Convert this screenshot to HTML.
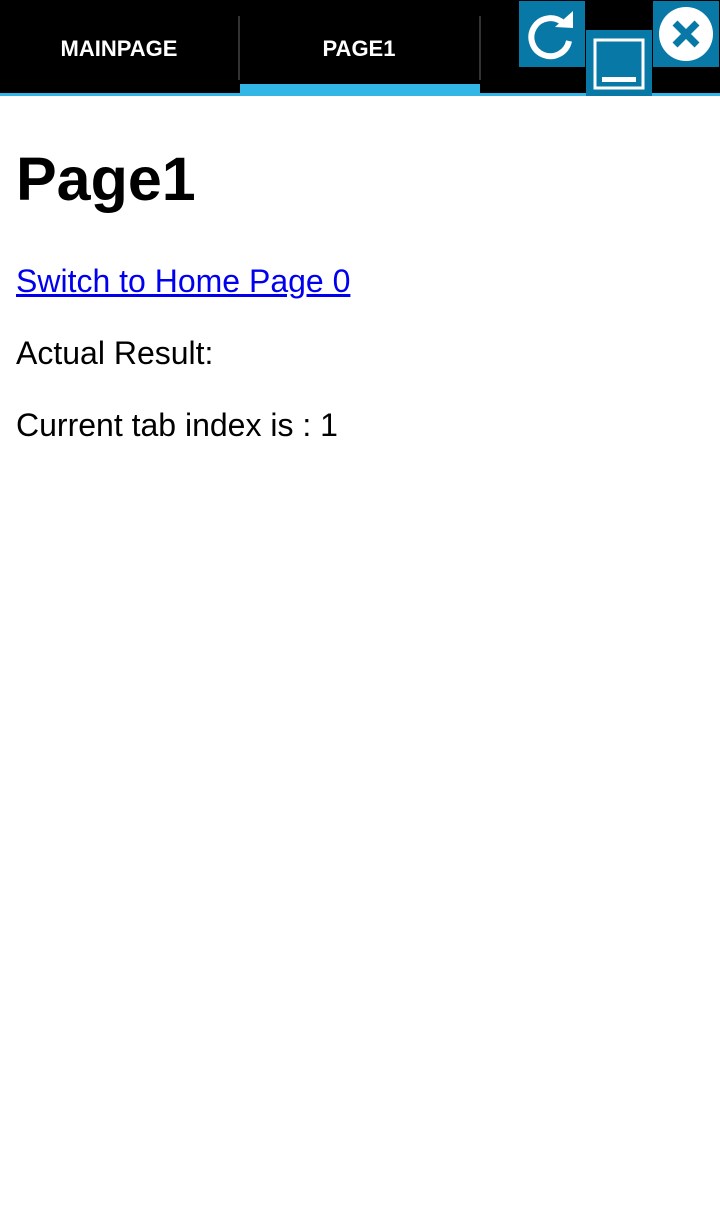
<!DOCTYPE html>
<html><head><style>
body{margin:0;width:720px;height:1230px;background:#fff;position:relative;overflow:hidden;font-family:"Liberation Sans",sans-serif}
.bar{position:absolute;left:0;top:0;width:720px;height:93px;background:#000}
.line{position:absolute;left:0;top:93px;width:720px;height:3px;background:#33b5e5}
.tab{position:absolute;top:0;height:96px;line-height:98px;color:#fff;font-weight:bold;font-size:22px;text-align:center}
.sep{position:absolute;top:16px;width:2px;height:64px;background:#333}
.ind{position:absolute;left:240px;top:84px;width:240px;height:12px;background:#33b5e5}
.btn{position:absolute;width:66px;height:66px;background:#0878a6}
h1{position:absolute;left:16px;top:144px;margin:0;font-size:61px;font-weight:bold}
p{position:absolute;left:16px;margin:0;font-size:32px}
a{color:#0000ee}
</style></head><body>
<div class="bar"></div><div class="line"></div><div class="ind"></div>
<div class="tab" style="left:0;width:238px">MAINPAGE</div>
<div class="sep" style="left:238px"></div>
<div class="tab" style="left:240px;width:238px">PAGE1</div>
<div class="sep" style="left:479px"></div>
<div class="btn" style="left:519px;top:1px"><svg width="66" height="66"><path d="M44 22 A19 19 0 1 0 50 40" fill="none" stroke="#fff" stroke-width="6"/><path d="M36 26 L54 27 L54 10 Z" fill="#fff"/></svg></div>
<div class="btn" style="left:586px;top:30px"><svg width="66" height="66"><rect x="9" y="10" width="48" height="48" fill="none" stroke="#fff" stroke-width="3"/><rect x="16" y="47" width="34" height="5" fill="#fff"/></svg></div>
<div class="btn" style="left:653px;top:1px"><svg width="66" height="66"><circle cx="33" cy="33" r="27" fill="#fff"/><path d="M22 22 L44 44 M44 22 L22 44" stroke="#0878a6" stroke-width="7"/></svg></div>
<h1>Page1</h1>
<p style="top:263px"><a href="#">Switch to Home Page 0</a></p>
<p style="top:335px">Actual Result:</p>
<p style="top:407px">Current tab index is : 1</p>
</body></html>
